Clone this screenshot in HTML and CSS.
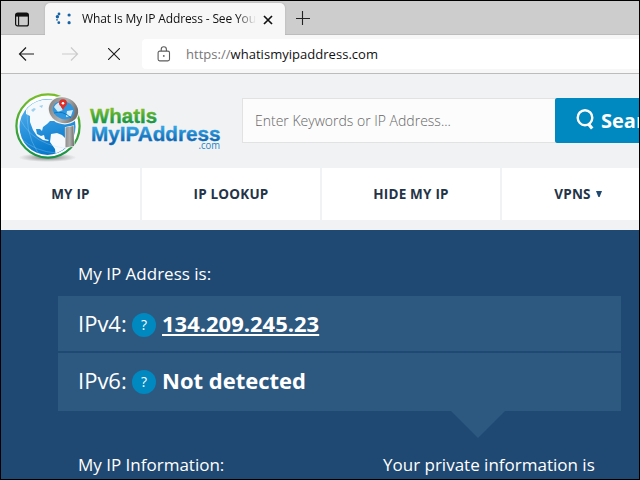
FILE: index.html
```html
<!DOCTYPE html>
<html lang="en">
<head>
<meta charset="utf-8">
<title>What Is My IP Address</title>
<link rel="stylesheet" href="styles.css">
</head>
<body>
<div class="window">
  <div class="tabbar">
    <svg class="tab-actions" width="16" height="16" viewBox="0 0 16 16"><rect x="1.6" y="2.1" width="12.8" height="12.8" rx="2" fill="none" stroke="#111" stroke-width="1.2"/><path d="M2 2h12v3.6H2z" fill="#111"/><path d="M4.6 5v9.5" stroke="#111" stroke-width="1.1"/></svg>
    <div class="tab">
      <svg class="favicon" width="16" height="16" viewBox="0 0 16 16" fill="#1763a5"><circle cx="4" cy="3" r="1.4"/><circle cx="2.4" cy="5.8" r="1.7"/><circle cx="2" cy="8.8" r=".9"/><circle cx="3.8" cy="11.7" r="1.4"/><circle cx="14.1" cy="4" r="1.6"/><circle cx="14.1" cy="11.7" r="1.6"/></svg>
      <span class="tab-title">What Is My IP Address - See Your</span>
      <svg class="tab-close" width="10" height="10" viewBox="0 0 10 10"><path d="M1 1l8 8M9 1L1 9" stroke="#111" stroke-width="1.7"/></svg>
    </div>
    <svg class="new-tab" width="14" height="14" viewBox="0 0 14 14"><path d="M0 7.5h14M6.5 0v14" stroke="#222" stroke-width="1.1"/></svg>
  </div>
  <div class="toolbar">
    <svg class="back" width="17" height="16" viewBox="0 0 17 16"><path d="M8 1.5L1.5 8 8 14.5M1 8h15" fill="none" stroke="#1c1c1c" stroke-width="1.2"/></svg>
    <svg class="forward" width="17" height="16" viewBox="0 0 17 16"><path d="M9 1.5L15.5 8 9 14.5M16 8H0" fill="none" stroke="#cbcbcb" stroke-width="1.2"/></svg>
    <svg class="stop" width="12" height="12" viewBox="0 0 12 12"><path d="M0 0l12 12M12 0L0 12" stroke="#1c1c1c" stroke-width="1.1"/></svg>
    <div class="address">
      <svg class="lock" width="14" height="16" viewBox="0 0 14 16"><rect x="1.1" y="5.1" width="11.4" height="9.8" rx="1.6" fill="none" stroke="#5c5c5c" stroke-width="1.1"/><path d="M4.2 5V3.4a2.6 2.6 0 0 1 5.2 0V5" fill="none" stroke="#5c5c5c" stroke-width="1.1"/><circle cx="6.8" cy="9.9" r=".9" fill="#5c5c5c"/></svg>
      <span class="url"><span class="scheme">https://</span>whatismyipaddress.com</span>
    </div>
  </div>
  <header class="header">
    <svg class="logo" width="210" height="80" viewBox="12 88 210 80">
      <defs>
        <linearGradient id="ring" x1="0" y1="0" x2="0" y2="1"><stop offset="0" stop-color="#78bd28"/><stop offset="1" stop-color="#159348"/></linearGradient>
        <linearGradient id="sea" x1="0" y1="0" x2="0.3" y2="1"><stop offset="0" stop-color="#65baf0"/><stop offset=".5" stop-color="#2f97df"/><stop offset="1" stop-color="#0879cb"/></linearGradient>
        <linearGradient id="metal" x1="0" y1="0" x2="1" y2="0"><stop offset="0" stop-color="#8e8e8e"/><stop offset=".5" stop-color="#b0b0b0"/><stop offset="1" stop-color="#6f6f6f"/></linearGradient>
        <linearGradient id="green" x1="0" y1="0" x2="0" y2="1"><stop offset=".25" stop-color="#79bd2b"/><stop offset=".85" stop-color="#109547"/></linearGradient>
        <linearGradient id="blue" x1="0" y1="0" x2="0" y2="1"><stop offset=".25" stop-color="#33a4e4"/><stop offset=".85" stop-color="#0b67b3"/></linearGradient>
        <radialGradient id="shade"><stop offset="0" stop-color="#555" stop-opacity=".8"/><stop offset="1" stop-color="#777" stop-opacity="0"/></radialGradient>
        <clipPath id="disc"><circle cx="47.5" cy="127" r="27.5"/></clipPath>
      </defs>
      <ellipse cx="47.5" cy="157.5" rx="29" ry="4.5" fill="url(#shade)"/>
      <circle cx="48" cy="126" r="31.6" fill="#fff" stroke="url(#ring)" stroke-width="2.2"/>
      <circle cx="47.5" cy="127" r="28" fill="url(#sea)"/>
      <g clip-path="url(#disc)">
        <path d="M26 109q8-10 24-10l5 2-5 8 4 8 5 2-4 2-5 0-3 3-4 3-1 4-2-2-4 0 1 5 4 2 3-1 1 4 4 1-1 1-5-1-6-4-4-6-3-8 0-6-4-2z" fill="#f6f9fc"/>
        <path d="M31 110l3-2 2 1-3 3zM39 106l4-1-1 3z" fill="#9dd0f0"/>
        <path d="M51 134l6-1 5 2 4 4 0 12-6 6-4 1-1-9-5-7z" fill="#f6f9fc"/>
        <path d="M20 119q9 18 28 25t27 2M28 106q-4 25 10 47M20 138q16 14 37 15" fill="none" stroke="#b6ddf6" stroke-opacity=".5" stroke-width=".6"/>
      </g>
      <path d="M65.5 127.5l8-1.5.5 20-8.5 1.5z" fill="url(#metal)" stroke="#f5f5f5" stroke-width="1.2" paint-order="stroke"/>
      <ellipse cx="63.5" cy="110.2" rx="16" ry="14" transform="rotate(20 63.5 110.2)" fill="#f4f4f4"/>
      <ellipse cx="63.5" cy="110.2" rx="13" ry="10.8" transform="rotate(20 63.5 110.2)" fill="#2f97df" stroke="url(#metal)" stroke-width="3.8"/>
      <path d="M54 107q3-5 8-5l-1 5 2 3-5 2zM67 111l6-1-2 6-5 1z" fill="#d5ecf9"/>
      <path d="M54 113q9-3 17 5" stroke="#0878c3" fill="none"/>
      <path d="M63 110.5c-1-4-4-4.6-4-7.2a4 4 0 0 1 8 0c0 2.6-3 3.2-4 7.2z" fill="#df3027"/><circle cx="63" cy="103.2" r="1.3" fill="#fff"/>
      <text class="logo-name" x="90" y="122.6" textLength="67" lengthAdjust="spacingAndGlyphs" fill="url(#green)" stroke="url(#green)">WhatIs</text>
      <text class="logo-name" x="91" y="140.6" textLength="129.5" lengthAdjust="spacingAndGlyphs" fill="url(#blue)" stroke="url(#blue)">MyIPAddress</text>
      <text class="logo-com" x="198.5" y="149" textLength="21.5" lengthAdjust="spacingAndGlyphs">.com</text>
    </svg>
    <div class="search">
      <div class="field">Enter Keywords or IP Address...</div>
      <div class="search-button">
        <svg width="18" height="21" viewBox="0 0 18 21"><ellipse cx="9" cy="8.7" rx="7.3" ry="7.5" fill="none" stroke="#fff" stroke-width="2.4"/><path d="M12 14.5l4.2 5" stroke="#fff" stroke-width="3.2"/></svg>
        <span>Search</span>
      </div>
    </div>
  </header>
  <nav class="nav">
    <div>MY IP</div><div>IP LOOKUP</div><div>HIDE MY IP</div><div class="menu">VPNS<svg width="6" height="6" viewBox="0 0 6 6"><path d="M0 0h6L3.6 6H2.4z" fill="#1f4972"/></svg></div>
  </nav>
  <main class="main">
    <h2 class="label">My IP Address is:</h2>
    <div class="panel">
      <div class="row"><span class="version">IPv4:</span><span class="help">?</span><span class="value ip">134.209.245.23</span></div>
      <div class="row last"><span class="version">IPv6:</span><span class="help">?</span><span class="value detected">Not detected</span></div>
    </div>
    <div class="pointer"></div>
    <div class="columns"><h2 class="label info">My IP Information:</h2><h2 class="label private">Your private information is</h2></div>
  </main>
</div>
</body>
</html>
```
FILE: styles.css
```css
* { box-sizing: border-box; }
html, body { margin: 0; }
body { width: 640px; height: 480px; overflow: hidden; font-family: "Open Sans", sans-serif; }
svg { display: block; flex: none; }
.window { width: 640px; height: 480px; border: 1px solid #000; overflow: hidden; background: #f1f2f4; }
.tabbar { display: flex; height: 34px; background: #cdcdcd; border-bottom: 1px solid #bcbcbc; }
.tab-actions { margin: 10px 15px 0 13px; }
.tab { display: flex; flex: none; width: 240px; height: 32px; margin-top: 2px; padding-left: 10px; background: #f7f7f7; border-radius: 5px 5px 0 0; box-shadow: 0 0 2px #aaa; clip-path: inset(-2px -2px 0 -2px); }
.favicon { margin-top: 8px; }
.tab-title { width: 175px; margin: 7px 0 0 11px; overflow: hidden; white-space: nowrap; font-size: 12px; line-height: 18px; color: #111; letter-spacing: -.14px; -webkit-mask-image: linear-gradient(90deg, #000 155px, transparent 174px); mask-image: linear-gradient(90deg, #000 155px, transparent 174px); }
.tab-close { margin: 12px 0 0 6px; }
.new-tab { margin: 10px 0 0 11px; }
.toolbar { display: flex; align-items: center; height: 39px; background: #f7f7f7; border-bottom: 1px solid #bcbcbc; }
.back { margin-left: 17px; }
.forward { margin-left: 27px; }
.stop { margin-left: 29px; }
.address { display: flex; align-items: center; flex: 1; height: 30px; margin-left: 22px; background: #fff; border-radius: 4px 0 0 4px; }
.lock { margin-left: 15px; }
.url { margin-left: 15px; font-size: 13px; line-height: 20px; letter-spacing: .03px; color: #111; }
.scheme { color: #777; }
.header { display: flex; height: 94px; background: #f1f2f4; }
.logo { margin: 14px 0 0 11px; }
.logo-name { font: bold 20.5px "Liberation Sans", sans-serif; stroke-width: .35px; }
.logo-com { font: 11px "Open Sans", sans-serif; fill: #2383c8; }
.search { display: flex; flex: none; height: 45px; margin: 24px 0 0 20px; }
.field { width: 313px; padding-left: 12px; border: 1px solid #e2e2e2; border-right: 0; background: #fcfcfc; color: #666; font-size: 14px; font-weight: 300; line-height: 44px; white-space: nowrap; }
.search-button { display: flex; width: 130px; padding: 11px 0 0 21px; background: #0088c0; border-radius: 2px; color: #fff; font-size: 20px; font-weight: 700; line-height: 24px; }
.search-button span { margin-left: 7px; }
.nav { display: grid; grid-template-columns: 139px 178px 178px 152px; gap: 2px; height: 52px; }
.nav div { display: flex; align-items: center; justify-content: center; background: #fff; color: #243447; font-size: 13.5px; font-weight: 700; letter-spacing: .2px; }
.nav svg { margin-left: 5px; }
.main { height: 249px; margin-top: 10px; padding-top: 33px; background: #1f4972; color: #fff; }
.label { margin: 0 0 0 77px; font-size: 17px; line-height: 22px; font-weight: 400; white-space: nowrap; }
.panel { width: 563px; margin: 11px 0 0 57px; }
.row { display: flex; align-items: center; height: 55px; padding: 0 0 1px 20px; background: #2d5980; }
.row.last { height: 58px; margin-top: 2px; padding: 0 0 4px 20px; }
.version { width: 54px; font-size: 22px; line-height: 30px; }
.help { width: 24px; height: 24px; margin-top: 4px; border-radius: 50%; background: #0088c0; text-align: center; font-size: 14px; line-height: 24px; }
.value { margin-left: 6px; font-size: 22px; line-height: 30px; font-weight: 700; white-space: nowrap; }
.ip { text-decoration: underline; text-decoration-thickness: 2px; text-underline-offset: 2px; text-decoration-skip-ink: none; }
.pointer { width: 54px; height: 27px; margin-left: 450px; background: #2d5980; clip-path: polygon(0 0, 100% 0, 50% 100%); }
.columns { display: flex; padding-top: 16px; }
.info { width: 305px; }
.private { margin-left: 0; }
```
